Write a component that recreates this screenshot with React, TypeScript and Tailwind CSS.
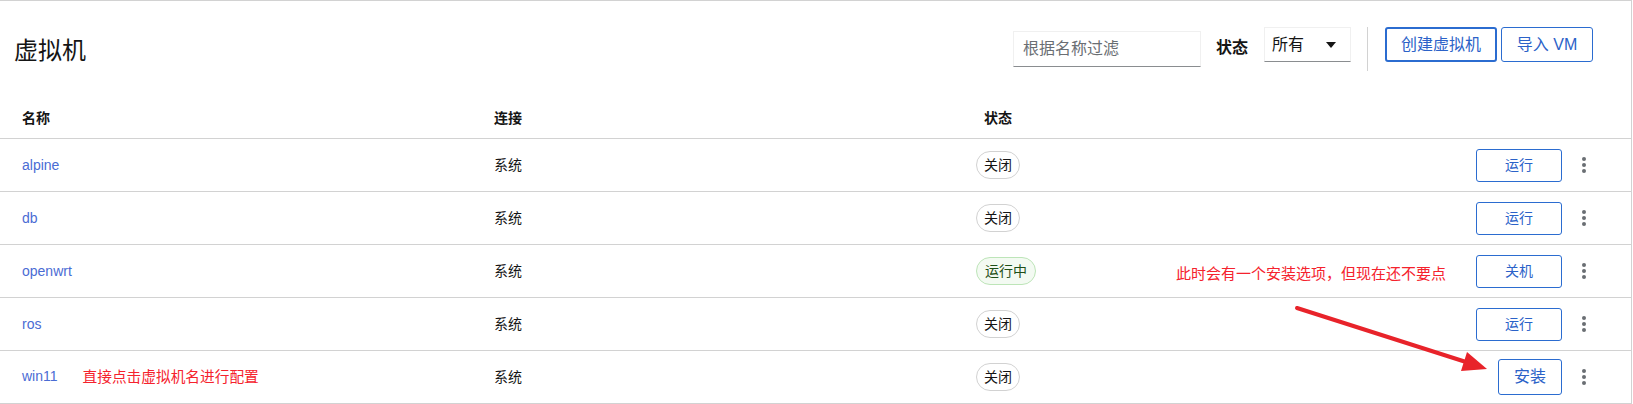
const font = { fontFamily: '"Liberation Sans", "Noto Sans CJK SC", sans-serif' };

const rows = [
  { name: "alpine", state: "关闭", action: "运行" },
  { name: "db", state: "关闭", action: "运行" },
  { name: "openwrt", state: "运行中", action: "关机" },
  { name: "ros", state: "关闭", action: "运行" },
  { name: "win11", state: "关闭", action: "安装" },
];

function Kebab() {
  return (
    <div className="flex w-[44px] flex-col items-center gap-[2px]">
      <span className="h-[4px] w-[4px] rounded-full bg-[#6a6e73]" />
      <span className="h-[4px] w-[4px] rounded-full bg-[#6a6e73]" />
      <span className="h-[4px] w-[4px] rounded-full bg-[#6a6e73]" />
    </div>
  );
}

function Badge({ state }: { state: string }) {
  if (state === "运行中") {
    return (
      <span className="inline-flex h-[28px] items-center rounded-full border border-[#bde5b8] bg-[#f3faf2] px-[8px] text-[14px] text-[#1e4f18]">
        {state}
      </span>
    );
  }
  return (
    <span className="inline-flex h-[28px] items-center rounded-full border border-[#d2d2d2] bg-white px-[7px] text-[14px] text-[#151515]">
      {state}
    </span>
  );
}

export default function App() {
  return (
    <div
      className="relative h-[404px] w-[1632px] overflow-hidden border-t border-r border-[#d2d2d2] bg-white text-[#151515]"
      style={font}
    >
      {/* page header */}
      <div className="flex h-[96px] items-start pt-[26px] pl-[14px] pr-[38px]">
        <h1 className="mt-[7px] text-[24px] leading-[34px] font-normal">虚拟机</h1>
        <div className="ml-auto flex items-start">
          <div className="mt-[4px] flex h-[36px] w-[188px] items-center border border-[#f0f0f0] border-b-[#8a8d90] pl-[9px] text-[16px] text-[#6a6e73]">
            根据名称过滤
          </div>
          <span className="mt-[9px] ml-[15px] text-[16px] leading-[24px] font-bold">状态</span>
          <div className="ml-[16px] flex h-[35px] w-[87px] items-center justify-between border border-[#f0f0f0] border-b-[#8a8d90] pl-[7px] pr-[14px] text-[16px]">
            <span>所有</span>
            <svg width="10" height="6" viewBox="0 0 10 6">
              <path d="M0 0h10L5 6z" fill="#151515" />
            </svg>
          </div>
          <div className="ml-[16px] h-[44px] w-px bg-[#d2d2d2]" />
          <button className="ml-[17px] h-[35px] w-[112px] rounded-[3px] border-2 border-[#2b6cd0] text-[16px] text-[#2b62c8]">
            创建虚拟机
          </button>
          <button className="ml-[4px] h-[35px] w-[92px] rounded-[3px] border border-[#2b6cd0] text-[16px] text-[#2b62c8]">
            导入 VM
          </button>
        </div>
      </div>

      {/* table header */}
      <div className="grid h-[42px] grid-cols-[494px_482px_200px_1fr] items-center border-b border-[#d2d2d2] pt-[2px] text-[14px] font-bold">
        <span className="pl-[22px]">名称</span>
        <span>连接</span>
        <span className="pl-[8px]">状态</span>
        <span />
      </div>

      {rows.map((r) => (
        <div
          key={r.name}
          className="grid h-[53px] grid-cols-[494px_482px_200px_1fr] items-center border-b border-[#d2d2d2] text-[14px]"
        >
          <div className="flex items-center pl-[22px]">
            <span className="text-[#4a6cd4]">{r.name}</span>
            {r.name === "win11" && (
              <span className="ml-[25px] text-[14.7px] text-[#f5222d]">直接点击虚拟机名进行配置</span>
            )}
          </div>
          <span>系统</span>
          <div>
            <Badge state={r.state} />
          </div>
          <div className="flex items-center justify-end pr-[25px]">
            {r.name === "openwrt" && (
              <span className="mt-[7px] mr-[30px] text-[15px] text-[#f5222d]">此时会有一个安装选项，但现在还不要点</span>
            )}
            {r.action === "安装" ? (
              <button className="h-[36px] w-[64px] rounded-[3px] border border-[#2b6cd0] text-[16px] text-[#2b62c8]">
                {r.action}
              </button>
            ) : (
              <button className="h-[33px] w-[86px] rounded-[3px] border border-[#2b6cd0] text-[14px] text-[#2b62c8]">
                {r.action}
              </button>
            )}
            <Kebab />
          </div>
        </div>
      ))}

      {/* annotation arrow */}
      <svg
        className="pointer-events-none absolute top-0 left-0"
        width="1633"
        height="404"
        viewBox="0 0 1633 404"
      >
        <line x1="1297" y1="307" x2="1466" y2="361" stroke="#e8232a" strokeWidth="4" strokeLinecap="round" />
        <polygon points="1487,368 1461,370 1467,351" fill="#e8232a" />
      </svg>
    </div>
  );
}
